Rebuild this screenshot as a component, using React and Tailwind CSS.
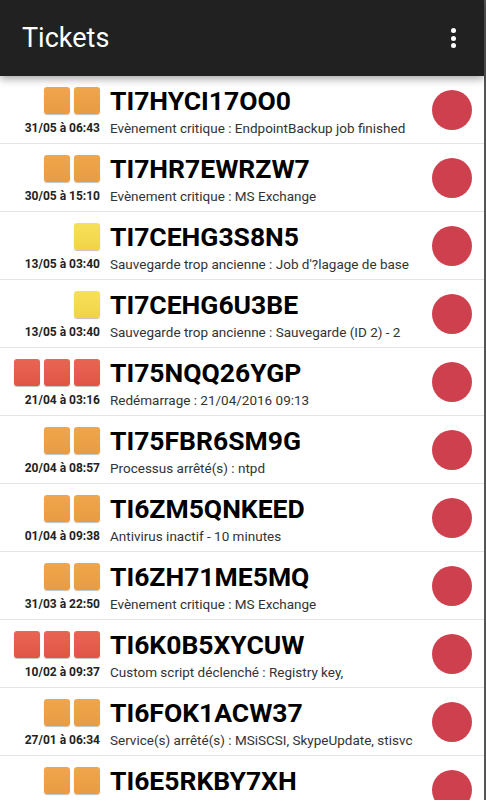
const tickets = [
  { id: 'TI7HYCI17OO0', date: '31/05 à 06:43', text: 'Evènement critique : EndpointBackup job finished', level: 'orange' },
  { id: 'TI7HR7EWRZW7', date: '30/05 à 15:10', text: 'Evènement critique : MS Exchange', level: 'orange' },
  { id: 'TI7CEHG3S8N5', date: '13/05 à 03:40', text: "Sauvegarde trop ancienne : Job d'?lagage de base", level: 'yellow' },
  { id: 'TI7CEHG6U3BE', date: '13/05 à 03:40', text: 'Sauvegarde trop ancienne : Sauvegarde (ID 2) - 2', level: 'yellow' },
  { id: 'TI75NQQ26YGP', date: '21/04 à 03:16', text: 'Redémarrage : 21/04/2016 09:13', level: 'red' },
  { id: 'TI75FBR6SM9G', date: '20/04 à 08:57', text: 'Processus arrêté(s) : ntpd', level: 'orange' },
  { id: 'TI6ZM5QNKEED', date: '01/04 à 09:38', text: 'Antivirus inactif - 10 minutes', level: 'orange' },
  { id: 'TI6ZH71ME5MQ', date: '31/03 à 22:50', text: 'Evènement critique : MS Exchange', level: 'orange' },
  { id: 'TI6K0B5XYCUW', date: '10/02 à 09:37', text: 'Custom script déclenché : Registry key,', level: 'red' },
  { id: 'TI6FOK1ACW37', date: '27/01 à 06:34', text: 'Service(s) arrêté(s) : MSiSCSI, SkypeUpdate, stisvc', level: 'orange' },
  { id: 'TI6E5RKBY7XH', date: '', text: '', level: 'orange' },
];

function Squares({ level }) {
  if (level === 'yellow') {
    return <span className="h-[27px] w-[26px] rounded-[3px] bg-gradient-to-b from-[#f7e05a] to-[#f0d444] shadow-[0_1px_1px_rgba(0,0,0,0.25)]" />;
  }
  const count = level === 'red' ? 3 : 2;
  const cls =
    level === 'red'
      ? 'h-[27px] w-[26px] rounded-[3px] bg-gradient-to-b from-[#ea6555] to-[#e05445] shadow-[0_1px_1px_rgba(0,0,0,0.25)]'
      : 'h-[27px] w-[26px] rounded-[3px] bg-gradient-to-b from-[#f0a64c] to-[#e89b42] shadow-[0_1px_1px_rgba(0,0,0,0.25)]';
  return Array.from({ length: count }).map((_, i) => <span key={i} className={cls} />);
}

function TicketRow({ ticket }) {
  return (
    <div className="flex h-[68px] shrink-0 items-center border-b border-[#e4e4e4] pr-[12px]">
      <div className="flex w-[100px] shrink-0 flex-col items-end pt-[3px]">
        <div className="flex gap-[4px]">
          <Squares level={ticket.level} />
        </div>
        <div className="mt-[7px] h-[14px] whitespace-nowrap text-[12px] font-bold leading-[14px] text-[#222]">{ticket.date}</div>
      </div>
      <div className="ml-[10px] flex min-w-0 flex-1 flex-col pt-[3px]">
        <div className="text-[26.5px] font-bold leading-[30px] text-black">{ticket.id}</div>
        <div className="mt-[4px] h-[16px] whitespace-nowrap text-[13.5px] leading-[16px] text-[#333]">{ticket.text}</div>
      </div>
      <span className="h-[40px] w-[40px] shrink-0 rounded-full bg-[#cf404e]" />
    </div>
  );
}

export default function App() {
  return (
    <div className="flex h-[800px] w-[486px] overflow-hidden bg-white font-['Roboto',sans-serif]">
      <div className="flex min-w-0 flex-1 flex-col">
        <header className="relative z-10 flex h-[76px] shrink-0 items-center justify-between bg-[#212121] pl-[22px] pr-[28px] shadow-[0_3px_8px_rgba(0,0,0,0.35)]">
          <h1 className="text-[27px] leading-none text-white">Tickets</h1>
          <div className="flex flex-col items-center gap-[2.5px]">
            <span className="h-[5px] w-[5px] rounded-full bg-white" />
            <span className="h-[5px] w-[5px] rounded-full bg-white" />
            <span className="h-[5px] w-[5px] rounded-full bg-white" />
          </div>
        </header>
        <div className="flex flex-col">
          {tickets.map((t) => (
            <TicketRow key={t.id} ticket={t} />
          ))}
        </div>
      </div>
      <div className="w-[2px] shrink-0 bg-[#555]" />
    </div>
  );
}
